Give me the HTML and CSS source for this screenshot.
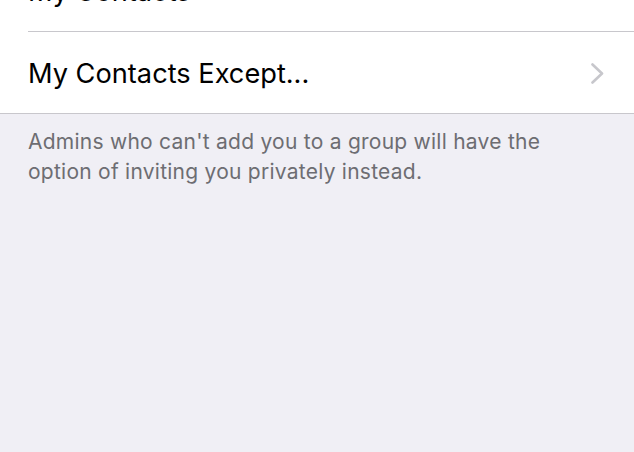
FILE: index.html
```html
<!DOCTYPE html>
<html>
<head>
<meta charset="utf-8">
<link rel="stylesheet" href="styles.css">
</head>
<body>
<div class="page">
  <div class="list">
    <div class="row">
      <span class="label">My Contacts</span>
    </div>
    <div class="row">
      <span class="label">My Contacts Except...</span>
      <svg class="chevron" width="13" height="21" viewBox="0 0 13 21">
        <polyline points="1.5,1.5 11,10.5 1.5,19.5" fill="none" stroke="#c7c7cc" stroke-width="2.6" stroke-linecap="round" stroke-linejoin="round"/>
      </svg>
    </div>
  </div>
  <div class="footer">Admins who can't add you to a group will have the option of inviting you privately instead.</div>
</div>
</body>
</html>
```
FILE: styles.css
```css
html, body {
  margin: 0;
  padding: 0;
  background: #f0eff5;
  height: 100%;
}
.page {
  font-family: Inter, "Liberation Sans", Arial, sans-serif;
  overflow: hidden;
  height: 452px;
}
.list {
  background: #ffffff;
  margin-top: -50px;
  padding-left: 28px;
  border-bottom: 1px solid #c8c7cc;
}
.row {
  height: 81px;
  display: flex;
  align-items: center;
  padding-right: 30px;
}
.row + .row {
  border-top: 1px solid #c8c7cc;
}
.label {
  flex: 1;
  font-size: 27.2px;
  line-height: 81px;
  color: #000000;
  padding-top: 2px;
}
.chevron {
  display: block;
  margin-top: 2px;
}
.footer {
  padding: 13px 60px 0 28px;
  font-size: 21px;
  line-height: 30px;
  letter-spacing: 0.25px;
  color: #6d6d72;
}
```
